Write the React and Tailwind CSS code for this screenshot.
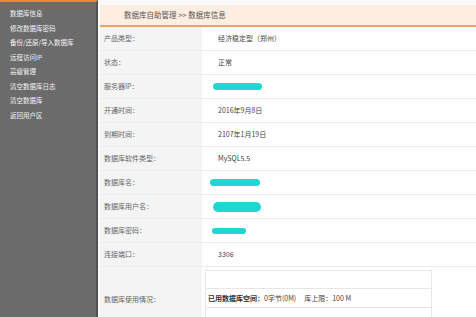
const menu = [
  '数据库信息',
  '修改数据库密码',
  '备份/还原/导入数据库',
  '远程访问IP',
  '高级管理',
  '清空数据库日志',
  '清空数据库',
  '返回用户区',
];

function Redact({ w, h, ml = 0 }) {
  return (
    <span
      className="block rounded-full bg-[#1fd6d0]"
      style={{ width: w, height: h, marginLeft: ml }}
    />
  );
}

const rows = [
  { label: '产品类型：', value: '经济稳定型（郑州）' },
  { label: '状态：', value: '正常' },
  { label: '服务器IP：', blob: { w: 49, h: 7, ml: -5 } },
  { label: '开通时间：', value: '2016年9月8日' },
  { label: '到期时间：', value: '2107年1月19日' },
  { label: '数据库软件类型：', value: 'MySQL5.5' },
  { label: '数据库名：', blob: { w: 50, h: 7, ml: -8 } },
  { label: '数据库用户名：', blob: { w: 48, h: 10, ml: -5 } },
  { label: '数据库密码：', blob: { w: 34, h: 6, ml: -6 } },
  { label: '连接端口：', value: '3306' },
];

export default function App() {
  return (
    <div
      className="flex h-[317px] w-[476px] overflow-hidden text-[#555]"
      style={{ fontFamily: '"Noto Sans CJK SC", "Liberation Sans", sans-serif' }}
    >
      <div className="w-[98px] shrink-0 bg-[#6b6b6b] border-t-2 border-t-[#ec8a2c] border-r-2 border-r-[#525252] pt-[4px] pl-[10px]">
        {menu.map((m) => (
          <div key={m} className="h-[14.5px] text-[6.5px] leading-[14.5px] text-[#f2f2f2] whitespace-nowrap">
            {m}
          </div>
        ))}
      </div>

      <div className="flex-1 bg-[#fafafa] pl-[2px] pt-[5px]">
        <div className="flex h-[22px] items-center border-b-2 border-[#e8a660] bg-[#fdeee1] pl-[24px] text-[7.5px] text-[#555]">
          数据库自助管理 &gt;&gt; 数据库信息
        </div>

        {rows.map((r) => (
          <div key={r.label} className="grid h-[24px] grid-cols-[102px_1fr] border-b border-[#ececec] text-[7px]">
            <div className="flex items-center bg-[#f4f4f4] pl-[4px] text-[#666]">{r.label}</div>
            <div className="flex items-center bg-white pl-[16px] text-[#444]">
              {r.blob ? <Redact {...r.blob} /> : r.value}
            </div>
          </div>
        ))}

        <div className="grid h-[62px] grid-cols-[102px_1fr] text-[7px]">
          <div className="flex items-center bg-[#f4f4f4] pl-[4px] pt-[2px] text-[#666]">数据库使用情况：</div>
          <div className="bg-white pl-[3px] pt-[3px]">
            <div className="w-[227px] border border-[#e6e6e6]">
              <div className="h-[18px] border-b border-[#e6e6e6]" />
              <div className="flex h-[19px] items-center border-b border-[#e6e6e6] pl-[2px] text-[#444]">
                <span className="font-bold text-[#333]">已用数据库空间：</span>
                <span>0字节(0M)</span>
                <span className="ml-[8px]">库上限：100 M</span>
              </div>
              <div className="h-[20px]" />
            </div>
          </div>
        </div>
      </div>
    </div>
  );
}
